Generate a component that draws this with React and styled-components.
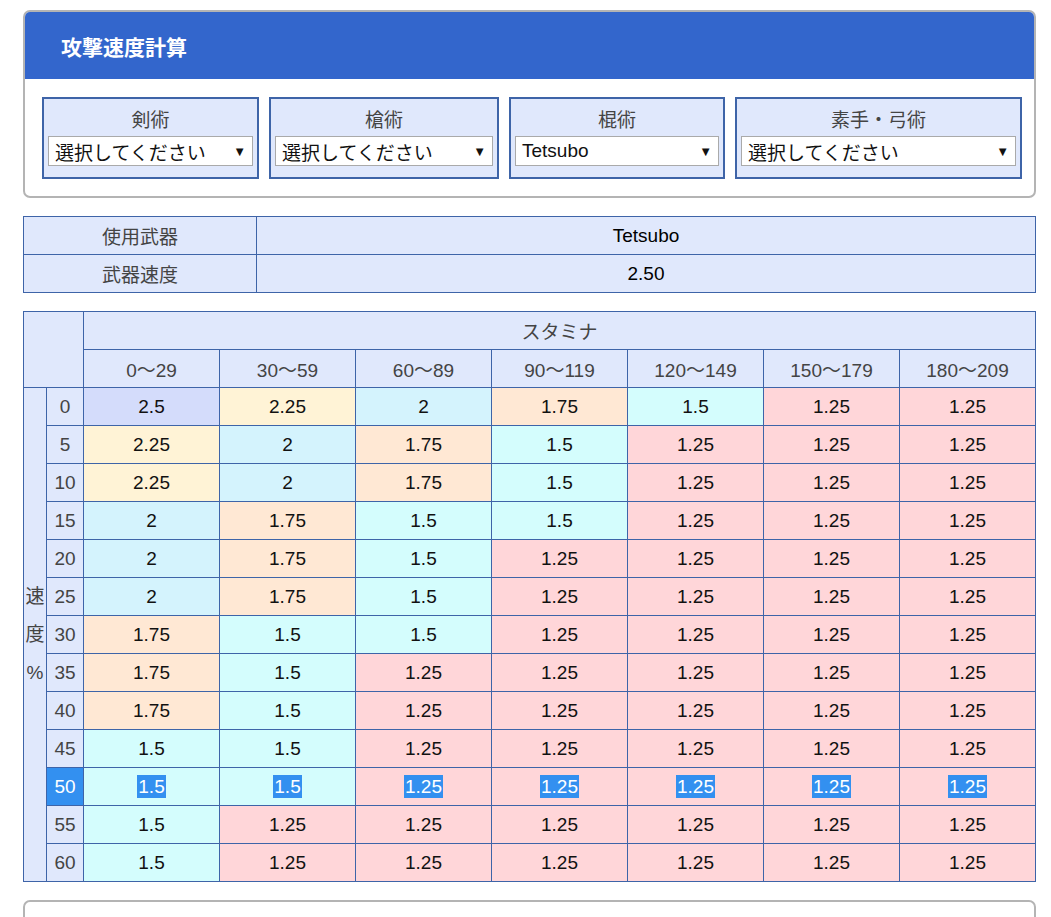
import React from 'react';
import styled, { createGlobalStyle } from 'styled-components';

const Global = createGlobalStyle`
  body {
    margin: 0;
    background: #fff;
    font-family: "Liberation Sans", "Noto Sans CJK JP", sans-serif;
    color: #333;
  }
`;

const Page = styled.div`
  padding: 10px 15px 0 23px;
  display: flex;
  flex-direction: column;
  gap: 18px;
`;

const Card = styled.div`
  border: 2px solid #b4b4b4;
  border-radius: 7px;
  overflow: hidden;
  background: #fff;
`;

const CardHead = styled.div`
  background: #3366cc;
  color: #fff;
  font-weight: bold;
  font-size: 21px;
  height: 67px;
  display: flex;
  align-items: center;
  padding-left: 36px;
`;

const SelectRow = styled.div`
  display: grid;
  grid-template-columns: 217px 230px 216px 287px;
  gap: 10px;
  padding: 18px 17px 17px 17px;
`;

const SelectBox = styled.div`
  border: 2px solid #3e64a8;
  background: #e0e8fc;
  height: 82px;
  display: flex;
  flex-direction: column;
  align-items: center;
  padding: 6px 4px 0;
  box-sizing: border-box;
  gap: 4px;
  font-size: 19px;
  color: #444;
`;

const Select = styled.div`
  align-self: stretch;
  background: #fff;
  border: 1px solid #aaa;
  height: 28px;
  display: flex;
  align-items: center;
  justify-content: space-between;
  padding: 0 6px;
  font-size: 19px;
  color: #111;
  &::after { content: "▼"; font-size: 13px; }
`;

const Table = styled.table`
  border-collapse: collapse;
  width: 100%;
  table-layout: fixed;
  font-size: 19px;
  td, th { border: 1px solid #3e64a8; height: 37px; padding: 0; text-align: center; font-weight: normal; }
`;

const Head = styled.td`
  background: #e0e8fc;
  color: #444;
`;

const Val = styled.td`
  background: #e0e8fc;
  color: #000;
  font-weight: bold;
`;

const colors = {
  '2.5': '#d4dcfb',
  '2.25': '#fff3d6',
  '2': '#d4f3fd',
  '1.75': '#ffe8d4',
  '1.5': '#d4fdfd',
  '1.25': '#ffd6d9',
};

const Cell = styled.td`
  background: ${p => colors[p.$v]};
  color: #111;
`;

const Sel = styled.span`
  background: #3390f0;
  color: #fff;
  padding: 1px 1px;
`;

const SelHead = styled.td`
  && { background: #3390f0; color: #fff; }
`;

const stam = ['0〜29', '30〜59', '60〜89', '90〜119', '120〜149', '150〜179', '180〜209'];
const rows = [
  [0, ['2.5', '2.25', '2', '1.75', '1.5']],
  [5, ['2.25', '2', '1.75', '1.5']],
  [10, ['2.25', '2', '1.75', '1.5']],
  [15, ['2', '1.75', '1.5', '1.5']],
  [20, ['2', '1.75', '1.5']],
  [25, ['2', '1.75', '1.5']],
  [30, ['1.75', '1.5', '1.5']],
  [35, ['1.75', '1.5']],
  [40, ['1.75', '1.5']],
  [45, ['1.5', '1.5']],
  [50, ['1.5', '1.5']],
  [55, ['1.5']],
  [60, ['1.5']],
];

const selects = [
  ['剣術', '選択してください'],
  ['槍術', '選択してください'],
  ['棍術', 'Tetsubo'],
  ['素手・弓術', '選択してください'],
];

export default function App() {
  return (
    <Page>
      <Global />
      <Card>
        <CardHead>攻撃速度計算</CardHead>
        <SelectRow>
          {selects.map(([l, v]) => (
            <SelectBox key={l}>
              {l}
              <Select>{v}</Select>
            </SelectBox>
          ))}
        </SelectRow>
      </Card>
      <Table>
        <colgroup><col style={{ width: 233 }} /><col /></colgroup>
        <tbody>
          <tr><Head>使用武器</Head><Val>Tetsubo</Val></tr>
          <tr><Head>武器速度</Head><Val>2.50</Val></tr>
        </tbody>
      </Table>
      <Table>
        <colgroup>
          <col style={{ width: 23 }} /><col style={{ width: 37 }} />
          {stam.map(s => <col key={s} />)}
        </colgroup>
        <tbody>
          <tr><Head colSpan={2} rowSpan={2} /><Head colSpan={7}>スタミナ</Head></tr>
          <tr>{stam.map(s => <Head key={s}>{s}</Head>)}</tr>
          {rows.map(([sp, vals], i) => {
            const full = stam.map((_, j) => vals[j] || '1.25');
            const sel = sp === 50;
            return (
              <tr key={sp}>
                {i === 0 && <Head rowSpan={13} style={{ lineHeight: '38px' }}>速<br />度<br />%</Head>}
                {sel ? <SelHead>{sp}</SelHead> : <Head>{sp}</Head>}
                {full.map((v, j) => (
                  <Cell key={j} $v={v}>{sel ? <Sel>{v}</Sel> : v}</Cell>
                ))}
              </tr>
            );
          })}
        </tbody>
      </Table>
      <Card style={{ height: 40 }} />
    </Page>
  );
}
